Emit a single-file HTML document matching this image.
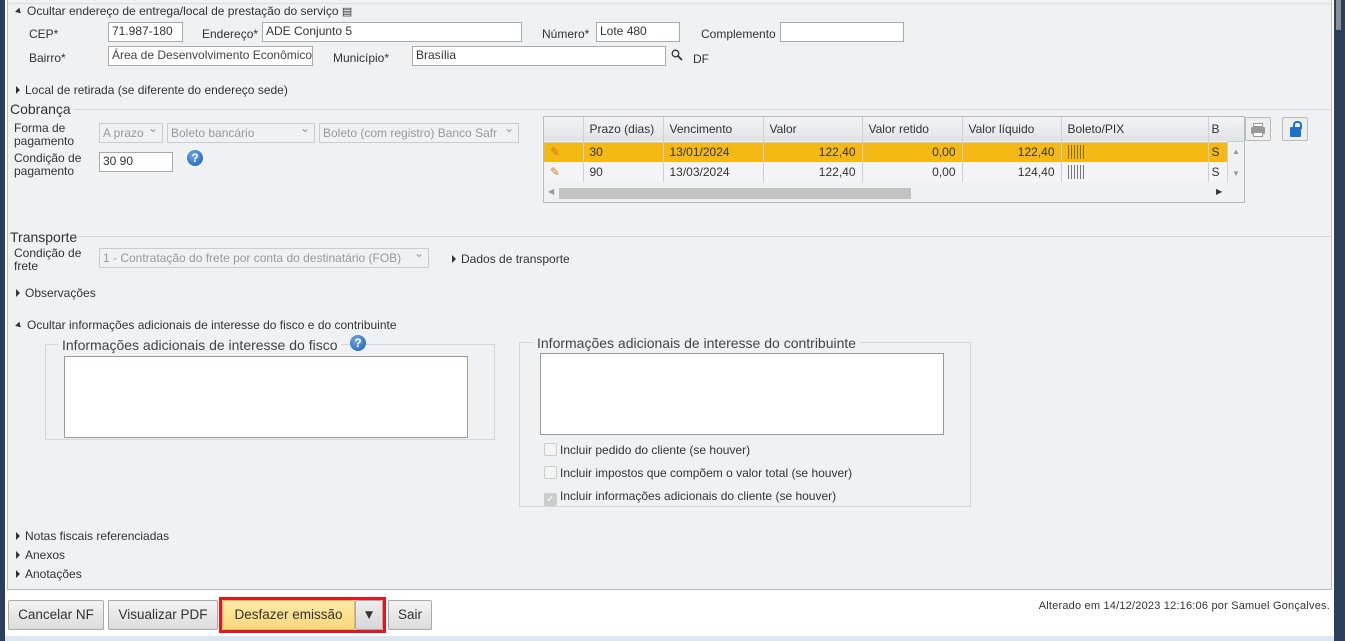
<!DOCTYPE html>
<html><head><meta charset="utf-8"><style>
*{box-sizing:border-box;margin:0;padding:0}
body{width:1345px;height:641px;position:relative;background:#fff;font-family:"Liberation Sans",sans-serif;font-size:12px;color:#333;overflow:hidden}
.a{position:absolute;white-space:nowrap}
.in{position:absolute;background:#fff;border:1px solid #aaa;height:20px;padding:1px 3px;font-size:12px;color:#333;white-space:nowrap;overflow:hidden}
.sel{position:absolute;background:#f0f1f3;border:1px solid #ccc;height:20px;padding:2px 3px;color:#999;white-space:nowrap;overflow:hidden}
.sel:after{content:"⌄";position:absolute;right:4px;top:-3px;color:#999}
.tri{display:inline-block;width:0;height:0;border-top:4px solid transparent;border-bottom:4px solid transparent;border-left:4px solid #333;margin-right:5px;vertical-align:0}
.dn{display:inline-block;width:0;height:0;border-left:3px solid transparent;border-right:3px solid transparent;border-top:5px solid #333;margin-right:5px;transform:rotate(-45deg);vertical-align:1px}
.hr{position:absolute;height:1px;background:#d8d8d8}
.q{position:absolute;width:16px;height:16px;border-radius:50%;background:radial-gradient(circle at 40% 35%,#6fa8e8,#1a5bb0);color:#fff;font-weight:bold;font-size:12px;text-align:center;line-height:16px}
table{border-collapse:collapse;table-layout:fixed}
td{height:20px;border-right:1px solid #d0d0d0;padding:0 6px;font-size:12px;overflow:hidden;white-space:nowrap}
.bc{display:inline-block;width:16px;height:14px;vertical-align:-3px;background:repeating-linear-gradient(90deg,#777 0 1px,transparent 1px 3px)}
.btn{position:absolute;top:600px;height:30px;border:1px solid #aaa;border-radius:2px;background:linear-gradient(#f4f4f4,#dcdcdc);font-size:13.5px;color:#333;line-height:28px;text-align:center}
.cb{display:inline-block;width:13px;height:13px;border:1px solid #ccc;background:#f4f4f4;margin-right:3px;vertical-align:-2px;border-radius:2px}
</style></head><body>
<div class="a" style="left:0;top:0;width:1345px;height:636px;background:#fff"></div>
<div class="a" style="left:0;top:0;width:5px;height:641px;background:#2b3f5c"></div>
<div class="a" style="left:1334px;top:0;width:11px;height:641px;background:#2b3f5c"></div>
<div class="a" style="left:1336px;top:0;width:5px;height:30px;background:#8a8f96"></div>
<div class="a" style="left:7px;top:0;width:1325px;height:590px;background:#f0f1f3;border-left:1px solid #bbb;border-right:1px solid #bbb;border-bottom:1px solid #bbb"></div>
<div class="a" style="left:5px;top:636px;width:1329px;height:5px;background:#dbe6f1"></div>
<div class="hr" style="left:8px;top:3px;width:1323px;background:#ddd"></div>

<div class="a" style="left:16px;top:4px"><span class="dn"></span>Ocultar endereço de entrega/local de prestação do serviço <span style="font-size:11px">▤</span></div>
<div class="a" style="left:29px;top:27px">CEP*</div>
<div class="in" style="left:108px;top:22px;width:75px">71.987-180</div>
<div class="a" style="left:202px;top:27px">Endereço*</div>
<div class="in" style="left:262px;top:22px;width:260px">ADE Conjunto 5</div>
<div class="a" style="left:542px;top:27px">Número*</div>
<div class="in" style="left:596px;top:22px;width:84px">Lote 480</div>
<div class="a" style="left:701px;top:27px">Complemento</div>
<div class="in" style="left:780px;top:22px;width:124px"></div>
<div class="a" style="left:29px;top:51px">Bairro*</div>
<div class="in" style="left:108px;top:46px;width:205px;color:#444">Área de Desenvolvimento Econômico</div>
<div class="a" style="left:333px;top:51px">Município*</div>
<div class="in" style="left:412px;top:46px;width:254px">Brasília</div>
<svg class="a" style="left:671px;top:49px" width="12" height="12"><circle cx="4.5" cy="4.5" r="3.3" fill="none" stroke="#333" stroke-width="1.3"/><line x1="7" y1="7" x2="11" y2="11" stroke="#333" stroke-width="1.8"/></svg>
<div class="a" style="left:693px;top:52px">DF</div>

<div class="a" style="left:16px;top:83px"><span class="tri"></span>Local de retirada (se diferente do endereço sede)</div>
<div class="a" style="left:10px;top:101px;font-size:14px">Cobrança</div>
<div class="hr" style="left:74px;top:109px;width:1257px"></div>
<div class="a" style="left:14px;top:122px;line-height:13px">Forma de<br>pagamento</div>
<div class="sel" style="left:99px;top:123px;width:64px">A prazo</div>
<div class="sel" style="left:167px;top:123px;width:148px">Boleto bancário</div>
<div class="sel" style="left:319px;top:123px;width:200px">Boleto (com registro) Banco Safr</div>
<div class="a" style="left:14px;top:152px;line-height:13px">Condição de<br>pagamento</div>
<div class="in" style="left:99px;top:152px;width:74px">30 90</div>
<div class="q" style="left:187px;top:150px">?</div>

<div class="a" style="left:543px;top:116px;width:702px;height:87px;border:1px solid #bbb;background:#f0f1f3;overflow:hidden">
<table style="position:absolute;left:0;top:0;width:683px">
<colgroup><col style="width:39px"><col style="width:80px"><col style="width:100px"><col style="width:99px"><col style="width:100px"><col style="width:99px"><col style="width:147px"><col style="width:19px"></colgroup>
<tr style="background:linear-gradient(#f4f4f6,#e2e3e6);height:25px;border-bottom:1px solid #ccc"><td style="height:25px"></td><td>Prazo (dias)</td><td>Vencimento</td><td>Valor</td><td>Valor retido</td><td>Valor líquido</td><td>Boleto/PIX</td><td style="padding:0 3px">B</td></tr>
<tr style="background:#f4b914"><td style="color:#d27a1c">✎</td><td>30</td><td>13/01/2024</td><td style="text-align:right">122,40</td><td style="text-align:right">0,00</td><td style="text-align:right">122,40</td><td><span class="bc" style="background:repeating-linear-gradient(90deg,#8a6a10 0 1px,transparent 1px 3px)"></span></td><td style="padding:0 3px">S</td></tr>
<tr style="background:#f4f4f6"><td style="color:#d27a1c">✎</td><td>90</td><td>13/03/2024</td><td style="text-align:right">122,40</td><td style="text-align:right">0,00</td><td style="text-align:right">124,40</td><td><span class="bc"></span></td><td style="padding:0 3px">S</td></tr>
</table>
<div class="a" style="left:683px;top:0;width:17px;height:25px;background:linear-gradient(#f4f4f6,#e2e3e6);border-bottom:1px solid #ccc"></div>
<div class="a" style="left:688px;top:30px;font-size:8px;color:#999">▲</div>
<div class="a" style="left:688px;top:52px;font-size:8px;color:#999">▼</div>
<div class="a" style="left:0;top:68px;width:683px;height:17px;background:#f0f1f3"></div>
<div class="a" style="left:15px;top:71px;width:352px;height:11px;background:#c2c2c2"></div>
<div class="a" style="left:4px;top:70px;font-size:8px;color:#999">◀</div>
<div class="a" style="left:672px;top:70px;font-size:8px;color:#333">▶</div>
</div>
<div class="a" style="left:1245px;top:117px;width:26px;height:24px;border:1px solid #bbb;border-radius:2px;background:#eee"><div style="position:absolute;left:7px;top:5px;width:10px;height:4px;border:1px solid #999;background:#fff"></div><div style="position:absolute;left:5px;top:9px;width:14px;height:7px;background:#999;border-radius:1px"></div><div style="position:absolute;left:7px;top:14px;width:10px;height:5px;background:#fff;border:1px solid #999"></div></div>
<div class="a" style="left:1282px;top:117px;width:26px;height:24px;border:1px solid #bbb;border-radius:2px;background:#eee"><div style="position:absolute;left:7px;top:9px;width:11px;height:10px;background:#1a73c8;border-radius:1px"></div><div style="position:absolute;left:10px;top:3px;width:9px;height:8px;border:2px solid #1a73c8;border-bottom:0;border-radius:4px 4px 0 0"></div></div>

<div class="a" style="left:10px;top:229px;font-size:14px">Transporte</div>
<div class="hr" style="left:78px;top:236px;width:1253px"></div>
<div class="a" style="left:14px;top:247px;line-height:13px">Condição de<br>frete</div>
<div class="sel" style="left:99px;top:248px;width:330px">1 - Contratação do frete por conta do destinatário (FOB)</div>
<div class="a" style="left:452px;top:252px"><span class="tri"></span>Dados de transporte</div>
<div class="a" style="left:16px;top:286px"><span class="tri"></span>Observações</div>
<div class="a" style="left:16px;top:318px"><span class="dn"></span>Ocultar informações adicionais de interesse do fisco e do contribuinte</div>

<div class="a" style="left:45px;top:344px;width:450px;height:96px;border:1px solid #d5d5d5"></div>
<div class="a" style="left:58px;top:337px;background:#f0f1f3;padding:0 4px;font-size:14px;color:#444">Informações adicionais de interesse do fisco</div>
<div class="q" style="left:350px;top:335px">?</div>
<div class="a" style="left:64px;top:356px;width:404px;height:82px;background:#fff;border:1px solid #999"></div>

<div class="a" style="left:519px;top:342px;width:452px;height:165px;border:1px solid #d5d5d5"></div>
<div class="a" style="left:533px;top:335px;background:#f0f1f3;padding:0 4px;font-size:14px;color:#444">Informações adicionais de interesse do contribuinte</div>
<div class="a" style="left:540px;top:353px;width:404px;height:82px;background:#fff;border:1px solid #999"></div>
<div class="a" style="left:544px;top:443px"><span class="cb"></span>Incluir pedido do cliente (se houver)</div>
<div class="a" style="left:544px;top:466px"><span class="cb"></span>Incluir impostos que compõem o valor total (se houver)</div>
<div class="a" style="left:544px;top:489px"><span class="cb" style="background:#ccc;color:#fff;font-size:10px;line-height:11px;text-align:center">✓</span>Incluir informações adicionais do cliente (se houver)</div>

<div class="a" style="left:16px;top:529px"><span class="tri"></span>Notas fiscais referenciadas</div>
<div class="a" style="left:16px;top:548px"><span class="tri"></span>Anexos</div>
<div class="a" style="left:16px;top:567px"><span class="tri"></span>Anotações</div>

<div class="btn" style="left:8px;width:96px">Cancelar NF</div>
<div class="btn" style="left:108px;width:110px">Visualizar PDF</div>
<div class="a" style="left:219px;top:597px;width:167px;height:36px;border:3px solid #e8131b"></div>
<div class="btn" style="left:222px;top:600px;width:133px;background:linear-gradient(#fde9a6,#f8d87c);border-color:#d7b86a">Desfazer emissão</div>
<div class="btn" style="left:355px;top:600px;width:28px;background:linear-gradient(#eee,#d6d6d6)">▼</div>
<div class="btn" style="left:388px;width:44px">Sair</div>
<div class="a" style="right:15px;top:600px;font-size:11px;color:#333;letter-spacing:0.2px">Alterado em 14/12/2023 12:16:06 por Samuel Gonçalves.</div>
</body></html>
